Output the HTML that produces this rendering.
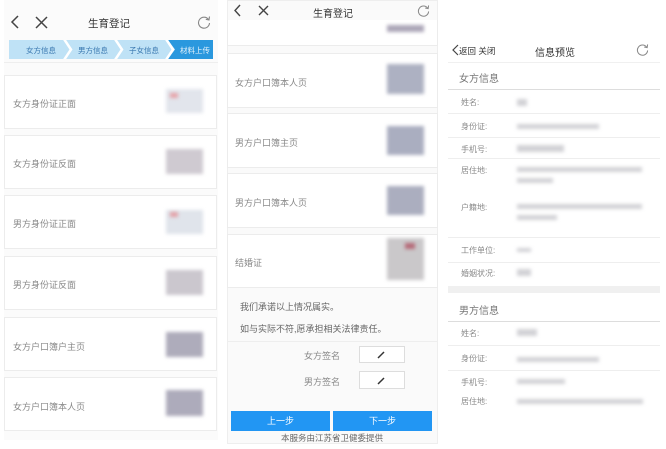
<!DOCTYPE html>
<html><head><meta charset="utf-8">
<style>
*{margin:0;padding:0;box-sizing:border-box}
body{width:666px;height:449px;background:#fff;position:relative;overflow:hidden;font-family:"Liberation Sans","Noto Sans CJK SC",sans-serif;color:#777}
.a{position:absolute}
.card{position:absolute;border:1px solid #ececec;background:#fff}
.lbl{position:absolute;font-size:9px;color:#8a8a8a;white-space:nowrap}
.th{position:absolute;filter:blur(1.8px)}
.t{position:absolute;font-size:10px;color:#333;white-space:nowrap}
.blur{position:absolute;background:#d2d2d6;filter:blur(1.8px);height:5px}
.hr{position:absolute;height:1px;background:#eee}
</style></head><body>

<!-- LEFT PANEL -->
<div class="a" style="left:4px;top:0;width:214px;height:440px;background:#fbfbfb"></div>
<svg class="a" style="left:9px;top:15px" width="14" height="14" viewBox="0 0 14 14"><path d="M9 1 L3 7 L9 13" stroke="#444" stroke-width="1.5" fill="none"/></svg>
<svg class="a" style="left:35px;top:16px" width="13" height="13" viewBox="0 0 13 13"><path d="M1 1 L12 12 M12 1 L1 12" stroke="#444" stroke-width="1.5" fill="none"/></svg>
<div class="t" style="left:88px;top:16px;font-size:10.5px">生育登记</div>
<svg class="a" style="left:197px;top:15px" width="14" height="14" viewBox="0 0 14 14"><path d="M11.5 4.5 A5.5 5.5 0 1 0 12.5 8" stroke="#888" stroke-width="1.1" fill="none"/><path d="M12.5 1.5 L12 5 L8.8 4.3" stroke="#888" stroke-width="1.1" fill="none"/></svg>
<svg class="a" style="left:9px;top:40px" width="204" height="19" viewBox="0 0 204 19">
<rect x="0" y="0" width="204" height="19" fill="#bfe2f6"/>
<polygon points="159,0 204,0 204,19 159,19 166,9.5" fill="#2a98de"/>
<path d="M55 -1 L62 9.5 L55 20 M106 -1 L113 9.5 L106 20 M157 -1 L164 9.5 L157 20" stroke="#fff" stroke-width="2.5" fill="none"/>
<text x="32" y="13" font-size="7.5" fill="#3a78b0" text-anchor="middle" font-family="Liberation Sans,Noto Sans CJK SC,sans-serif">女方信息</text>
<text x="84" y="13" font-size="7.5" fill="#3a78b0" text-anchor="middle" font-family="Liberation Sans,Noto Sans CJK SC,sans-serif">男方信息</text>
<text x="135" y="13" font-size="7.5" fill="#3a78b0" text-anchor="middle" font-family="Liberation Sans,Noto Sans CJK SC,sans-serif">子女信息</text>
<text x="186" y="13" font-size="7.5" fill="#e8f4fc" text-anchor="middle" font-family="Liberation Sans,Noto Sans CJK SC,sans-serif">材料上传</text>
</svg>
<div class="a" style="left:4px;top:62px;width:214px;height:1px;background:#eee"></div>

<div class="card" style="left:4px;top:75px;width:213px;height:54px"></div>
<div class="lbl" style="left:13px;top:97px">女方身份证正面</div>
<div class="th" style="left:166px;top:89px;width:37px;height:24px;background:#e2e5ec"></div><div class="th" style="left:170px;top:93px;width:8px;height:5px;background:#e6a3a8"></div>

<div class="card" style="left:4px;top:135px;width:213px;height:54px"></div>
<div class="lbl" style="left:13px;top:157px">女方身份证反面</div>
<div class="th" style="left:166px;top:149px;width:37px;height:25px;background:#cfcad1"></div>

<div class="card" style="left:4px;top:195px;width:213px;height:54px"></div>
<div class="lbl" style="left:13px;top:217px">男方身份证正面</div>
<div class="th" style="left:166px;top:210px;width:37px;height:24px;background:#e0e4eb"></div><div class="th" style="left:170px;top:212px;width:8px;height:5px;background:#e3a0a6"></div>

<div class="card" style="left:4px;top:256px;width:213px;height:54px"></div>
<div class="lbl" style="left:13px;top:278px">男方身份证反面</div>
<div class="th" style="left:166px;top:270px;width:37px;height:25px;background:#cbc7ce"></div>

<div class="card" style="left:4px;top:317px;width:213px;height:54px"></div>
<div class="lbl" style="left:13px;top:340px">女方户口簿户主页</div>
<div class="th" style="left:166px;top:332px;width:37px;height:25px;background:#aeacbb"></div>

<div class="card" style="left:4px;top:377px;width:213px;height:54px"></div>
<div class="lbl" style="left:13px;top:400px">女方户口簿本人页</div>
<div class="th" style="left:166px;top:390px;width:37px;height:26px;background:#adabbb"></div>

<!-- MIDDLE PANEL -->
<div class="a" style="left:227px;top:0;width:211px;height:444px;background:#fafafa;border:1px solid #eee"></div>
<svg class="a" style="left:232px;top:4px" width="12" height="13" viewBox="0 0 12 13"><path d="M8 1 L3 6.5 L8 12" stroke="#444" stroke-width="1.4" fill="none"/></svg>
<svg class="a" style="left:258px;top:5px" width="11" height="11" viewBox="0 0 11 11"><path d="M1 1 L10 10 M10 1 L1 10" stroke="#444" stroke-width="1.4" fill="none"/></svg>
<div class="t" style="left:313px;top:5px;font-size:10px">生育登记</div>
<svg class="a" style="left:417px;top:4px" width="13" height="13" viewBox="0 0 14 14"><path d="M11.5 4.5 A5.5 5.5 0 1 0 12.5 8" stroke="#888" stroke-width="1.1" fill="none"/><path d="M12.5 1.5 L12 5 L8.8 4.3" stroke="#888" stroke-width="1.1" fill="none"/></svg>
<div class="card" style="left:227px;top:20px;width:211px;height:26px;border-top:none"></div>
<div class="th" style="left:387px;top:25px;width:37px;height:7px;background:#aca6b8"></div>

<div class="card" style="left:227px;top:53px;width:211px;height:55px"></div>
<div class="lbl" style="left:235px;top:76px">女方户口簿本人页</div>
<div class="th" style="left:387px;top:64px;width:37px;height:30px;background:#adb1c2"></div>

<div class="card" style="left:227px;top:113px;width:211px;height:55px"></div>
<div class="lbl" style="left:235px;top:136px">男方户口簿主页</div>
<div class="th" style="left:387px;top:126px;width:37px;height:29px;background:#aaaec0"></div>

<div class="card" style="left:227px;top:173px;width:211px;height:55px"></div>
<div class="lbl" style="left:235px;top:196px">男方户口簿本人页</div>
<div class="th" style="left:387px;top:186px;width:37px;height:29px;background:#abaebf"></div>

<div class="card" style="left:227px;top:234px;width:211px;height:54px"></div>
<div class="lbl" style="left:235px;top:256px">结婚证</div>
<div class="th" style="left:387px;top:238px;width:37px;height:42px;background:#cac8ca"></div><div class="th" style="left:405px;top:243px;width:10px;height:6px;background:#b56a78"></div>

<div class="lbl" style="left:240px;top:300px;color:#666">我们承诺以上情况属实。</div>
<div class="lbl" style="left:240px;top:322px;color:#666">如与实际不符,愿承担相关法律责任。</div>
<div class="hr" style="left:227px;top:341px;width:211px"></div>
<div class="lbl" style="left:304px;top:349px">女方签名</div>
<div class="a" style="left:359px;top:346px;width:46px;height:17px;border:1px solid #ddd;background:#fff"></div>
<svg class="a" style="left:377px;top:350px" width="9" height="9" viewBox="0 0 9 9"><path d="M1 8 L7 2" stroke="#333" stroke-width="1.5"/></svg>
<div class="lbl" style="left:304px;top:375px">男方签名</div>
<div class="a" style="left:359px;top:371px;width:46px;height:18px;border:1px solid #ddd;background:#fff"></div>
<svg class="a" style="left:377px;top:376px" width="9" height="9" viewBox="0 0 9 9"><path d="M1 8 L7 2" stroke="#333" stroke-width="1.5"/></svg>
<div class="a" style="left:231px;top:411px;width:99px;height:20px;background:#2296f3;color:#fff;font-size:9px;text-align:center;line-height:20px">上一步</div>
<div class="a" style="left:333px;top:411px;width:99px;height:20px;background:#2296f3;color:#fff;font-size:9px;text-align:center;line-height:20px">下一步</div>
<div class="lbl" style="left:281px;top:432px;color:#666;font-size:8.5px">本服务由江苏省卫健委提供</div>

<!-- RIGHT PANEL -->
<svg class="a" style="left:451px;top:44px" width="8" height="12" viewBox="0 0 8 12"><path d="M7 1 L2 6 L7 11" stroke="#444" stroke-width="1.2" fill="none"/></svg>
<div class="t" style="left:459px;top:45px;font-size:8.5px">返回 关闭</div>
<div class="t" style="left:535px;top:44px;font-size:10px">信息预览</div>
<svg class="a" style="left:636px;top:43px" width="13" height="13" viewBox="0 0 14 14"><path d="M11.5 4.5 A5.5 5.5 0 1 0 12.5 8" stroke="#888" stroke-width="1.1" fill="none"/><path d="M12.5 1.5 L12 5 L8.8 4.3" stroke="#888" stroke-width="1.1" fill="none"/></svg>
<div class="hr" style="left:448px;top:62px;width:212px;background:#f0f0f0"></div>
<div class="lbl" style="left:459px;top:70px;font-size:10px;color:#777">女方信息</div>
<div class="hr" style="left:448px;top:89px;width:212px;background:#ddd"></div>
<div class="lbl" style="left:461px;top:97px;font-size:8px">姓名:</div><div class="blur" style="left:517px;top:99px;width:10px;height:7px"></div>
<div class="hr" style="left:448px;top:113px;width:212px"></div>
<div class="lbl" style="left:461px;top:121px;font-size:8px">身份证:</div><div class="blur" style="left:517px;top:124px;width:82px"></div>
<div class="hr" style="left:448px;top:137px;width:212px"></div>
<div class="lbl" style="left:461px;top:144px;font-size:8px">手机号:</div><div class="blur" style="left:517px;top:145px;width:47px;height:7px"></div>
<div class="hr" style="left:448px;top:158px;width:212px"></div>
<div class="lbl" style="left:461px;top:165px;font-size:8px">居住地:</div><div class="blur" style="left:517px;top:167px;width:125px"></div><div class="blur" style="left:517px;top:178px;width:36px"></div>
<div class="lbl" style="left:461px;top:202px;font-size:8px">户籍地:</div><div class="blur" style="left:517px;top:204px;width:125px"></div><div class="blur" style="left:517px;top:215px;width:40px"></div>
<div class="hr" style="left:448px;top:237px;width:212px"></div>
<div class="lbl" style="left:461px;top:245px;font-size:8px">工作单位:</div><div class="blur" style="left:517px;top:248px;width:14px;height:4px"></div>
<div class="hr" style="left:448px;top:262px;width:212px"></div>
<div class="lbl" style="left:461px;top:268px;font-size:8px">婚姻状况:</div><div class="blur" style="left:517px;top:269px;width:14px;height:7px"></div>
<div class="a" style="left:448px;top:286px;width:212px;height:7px;background:#f0f0f0"></div>
<div class="lbl" style="left:459px;top:302px;font-size:10px;color:#777">男方信息</div>
<div class="hr" style="left:448px;top:321px;width:212px;background:#ddd"></div>
<div class="lbl" style="left:461px;top:328px;font-size:8px">姓名:</div><div class="blur" style="left:517px;top:329px;width:20px;height:7px"></div>
<div class="hr" style="left:448px;top:345px;width:212px"></div>
<div class="lbl" style="left:461px;top:353px;font-size:8px">身份证:</div><div class="blur" style="left:517px;top:357px;width:82px"></div>
<div class="hr" style="left:448px;top:370px;width:212px"></div>
<div class="lbl" style="left:461px;top:377px;font-size:8px">手机号:</div><div class="blur" style="left:517px;top:379px;width:48px"></div>
<div class="lbl" style="left:461px;top:396px;font-size:8px">居住地:</div><div class="blur" style="left:517px;top:399px;width:126px"></div>
</body></html>
